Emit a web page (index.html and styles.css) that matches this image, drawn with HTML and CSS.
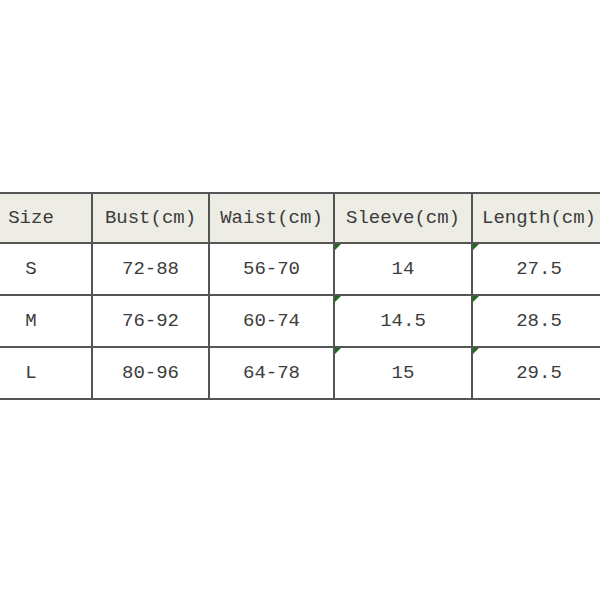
FILE: index.html
```html
<!DOCTYPE html>
<html>
<head>
<meta charset="utf-8">
<link rel="stylesheet" href="styles.css">
</head>
<body>
<div class="page">
  <table class="sizes">
    <colgroup>
      <col class="c1"><col class="c2"><col class="c3"><col class="c4"><col class="c5">
    </colgroup>
    <thead>
      <tr>
        <th>Size</th><th>Bust(cm)</th><th>Waist(cm)</th><th>Sleeve(cm)</th><th>Length(cm)</th>
      </tr>
    </thead>
    <tbody>
      <tr><td>S</td><td>72-88</td><td>56-70</td><td class="flag">14</td><td class="flag">27.5</td></tr>
      <tr><td>M</td><td>76-92</td><td>60-74</td><td class="flag">14.5</td><td class="flag">28.5</td></tr>
      <tr><td>L</td><td>80-96</td><td>64-78</td><td class="flag">15</td><td class="flag">29.5</td></tr>
    </tbody>
  </table>
</div>
</body>
</html>
```
FILE: styles.css
```css
html, body {
  margin: 0;
  padding: 0;
  background: #ffffff;
}
.page {
  width: 600px;
  height: 600px;
  overflow: hidden;
  padding-top: 192px;
  box-sizing: border-box;
}
.sizes {
  margin-left: -31px;
  border-collapse: collapse;
  table-layout: fixed;
  width: 636px;
  font-family: "Liberation Mono", "DejaVu Sans Mono", monospace;
  font-size: 19px;
  color: #3c3c3c;
}
.c1 { width: 122px; }
.c2 { width: 117px; }
.c3 { width: 125px; }
.c4 { width: 138px; }
.c5 { width: 134px; }
.sizes th, .sizes td {
  border: 2px solid #555555;
  text-align: center;
  vertical-align: middle;
  padding: 0;
  height: 50px;
  font-weight: normal;
}
.sizes th {
  background: #edece5;
  height: 48px;
}
.sizes td {
  background: #ffffff;
}
.flag {
  position: relative;
}
.flag::before {
  content: "";
  position: absolute;
  left: 0;
  top: 0;
  width: 0;
  height: 0;
  border-top: 6px solid #1e6b1e;
  border-right: 6px solid transparent;
}
```
